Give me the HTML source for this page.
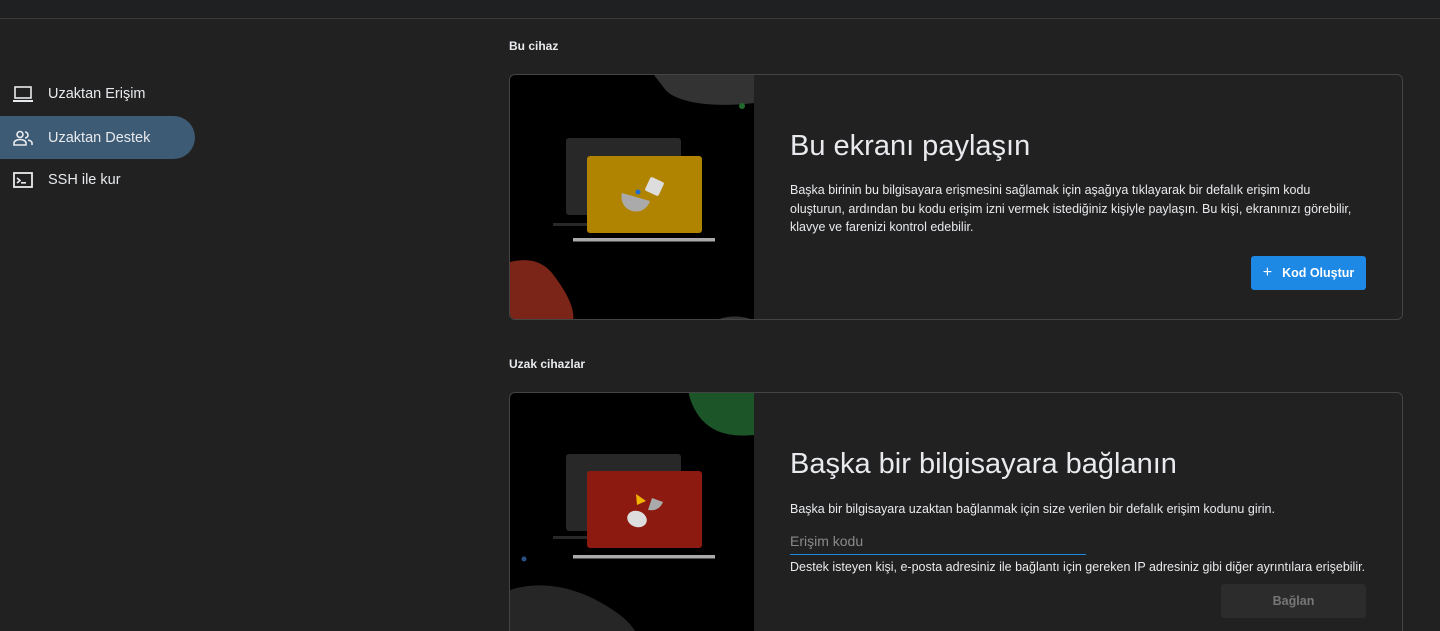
<!DOCTYPE html>
<html><head><meta charset="utf-8"><style>
*{box-sizing:border-box;margin:0;padding:0}
html,body{width:1440px;height:631px;overflow:hidden}
body{background:#212121;font-family:"Liberation Sans",sans-serif;color:#e8eaed;position:relative}
.top{position:absolute;left:0;top:0;width:1440px;height:19px;background:#1f2022;border-bottom:1px solid #3a3a3a}
.nav{position:absolute;left:0;height:43px;width:195px;display:flex;align-items:center;font-size:14.5px;color:#e8eaed}
.nav svg{position:absolute;left:13px}
.nav span{position:absolute;left:48px}
.sel{background:#3d5b75;border-radius:0 22px 22px 0}
.h{position:absolute;left:509px;font-size:12px;font-weight:bold;color:#e8eaed}
.card{position:absolute;left:509px;width:894px;border:1.5px solid #444;border-radius:6px;overflow:hidden;background:#212121}
.img{position:absolute;left:0;top:0;width:244px;height:100%;background:#000;overflow:hidden}
.t{position:absolute;left:280px;font-size:29px;color:#e8eaed}
.p{position:absolute;left:280px;font-size:12.5px;line-height:18.5px;color:#e8eaed;width:572px}
</style></head><body>
<div class="top"></div>
<div class="nav" style="top:72px"><svg width="20" height="18" viewBox="0 0 20 18"><rect x="2" y="2" width="16" height="11" fill="none" stroke="#e8eaed" stroke-width="1.6"/><rect x="0" y="15" width="20" height="2" fill="#e8eaed"/></svg><span>Uzaktan Erişim</span></div>
<div class="nav sel" style="top:116px"><svg width="20" height="16" viewBox="0 0 20 16"><circle cx="7" cy="4.5" r="3" fill="none" stroke="#e8eaed" stroke-width="1.6"/><path d="M12 2a3 3 0 0 1 0 6" fill="none" stroke="#e8eaed" stroke-width="1.6"/><path d="M1 15v-2c0-2 3-3.5 6-3.5s6 1.5 6 3.5v2z" fill="none" stroke="#e8eaed" stroke-width="1.6"/><path d="M15 10c2 .5 4 1.5 4 3v2" fill="none" stroke="#e8eaed" stroke-width="1.6"/></svg><span>Uzaktan Destek</span></div>
<div class="nav" style="top:158px"><svg width="20" height="16" viewBox="0 0 20 16"><rect x="1" y="1" width="18" height="14" fill="none" stroke="#e8eaed" stroke-width="1.8"/><path d="M4 6l3 2.5-3 2.5" fill="none" stroke="#e8eaed" stroke-width="1.6"/><rect x="8" y="10" width="5" height="1.6" fill="#e8eaed"/></svg><span>SSH ile kur</span></div>

<div class="h" style="top:39px">Bu cihaz</div>
<div class="card" style="top:74px;height:246px">
 <div class="img"><svg width="244" height="246" viewBox="0 0 244 246">
  <path d="M144 0h100v28c-40 5-80 0-90-15z" fill="#333"/>
  <circle cx="232" cy="31" r="3" fill="#1e6b2c"/>
  <rect x="56" y="63" width="115" height="77" rx="3" fill="#282828"/>
  <rect x="43" y="148" width="80" height="3" fill="#282828"/>
  <rect x="77" y="81" width="115" height="77" rx="3" fill="#b08400"/>
  <rect x="63" y="163" width="142" height="3.5" fill="#aaa"/>
  <path d="M112 118A14 14 0 0 0 140 126Z" fill="#aaa"/>
  <rect x="137" y="104" width="15" height="15" rx="2" fill="#ddd" transform="rotate(25 144.5 111.5)"/>
  <circle cx="128" cy="117" r="2.5" fill="#1f6fd0"/>
  <path d="M0 187c20-5 35 0 45 15 15 20 20 35 18 44H0z" fill="#7a2518"/>
  <path d="M205 246c10-6 30-6 39 0z" fill="#333"/>
 </svg></div>
 <div class="t" style="top:55px">Bu ekranı paylaşın</div>
 <div class="p" style="top:106px">Başka birinin bu bilgisayara erişmesini sağlamak için aşağıya tıklayarak bir defalık erişim kodu oluşturun, ardından bu kodu erişim izni vermek istediğiniz kişiyle paylaşın. Bu kişi, ekranınızı görebilir, klavye ve farenizi kontrol edebilir.</div>
 <div style="position:absolute;left:741px;top:181px;width:115px;height:34px;background:#1e88e5;border-radius:3px;color:#fff;font-size:12.5px;font-weight:bold;display:flex;align-items:center;justify-content:center"><span style="font-weight:normal;font-size:16px;margin-right:10px">+</span>Kod Oluştur</div>
</div>

<div class="h" style="top:357px">Uzak cihazlar</div>
<div class="card" style="top:392px;height:260px">
 <div class="img"><svg width="244" height="260" viewBox="0 0 244 260">
  <path d="M179 0h65v42c-30 3-55-5-65-40z" fill="#1b5528"/>
  <rect x="56" y="61" width="115" height="77" rx="3" fill="#282828"/>
  <rect x="43" y="143" width="80" height="3" fill="#282828"/>
  <rect x="77" y="78" width="115" height="77" rx="3" fill="#8c1a10"/>
  <rect x="63" y="162" width="142" height="3.5" fill="#aaa"/>
  <path d="M126 101l10 7-9 4z" fill="#f0b400"/>
  <path d="M142 105l11 4c-3 7-8 9-15 8z" fill="#aaa"/>
  <ellipse cx="127" cy="126" rx="10" ry="8" transform="rotate(20 127 126)" fill="#ddd"/>
  <circle cx="14" cy="166" r="2.5" fill="#2a4f85"/>
  <path d="M0 197c30-10 70-5 110 25 10 8 20 18 22 38H0z" fill="#262626"/>
 </svg></div>
 <div class="t" style="top:55px">Başka bir bilgisayara bağlanın</div>
 <div class="p" style="top:107px;width:600px">Başka bir bilgisayara uzaktan bağlanmak için size verilen bir defalık erişim kodunu girin.</div>
 <div style="position:absolute;left:280px;top:140px;width:296px;height:22px;border-bottom:1px solid #1e88e5;font-size:14px;color:#8a8a8a">Erişim kodu</div>
 <div class="p" style="top:165px;width:600px">Destek isteyen kişi, e-posta adresiniz ile bağlantı için gereken IP adresiniz gibi diğer ayrıntılara erişebilir.</div>
 <div style="position:absolute;left:711px;top:191px;width:145px;height:34px;background:#2c2c2c;border-radius:3px;color:#777;font-size:12.5px;font-weight:bold;display:flex;align-items:center;justify-content:center">Bağlan</div>
</div>
</body></html>
